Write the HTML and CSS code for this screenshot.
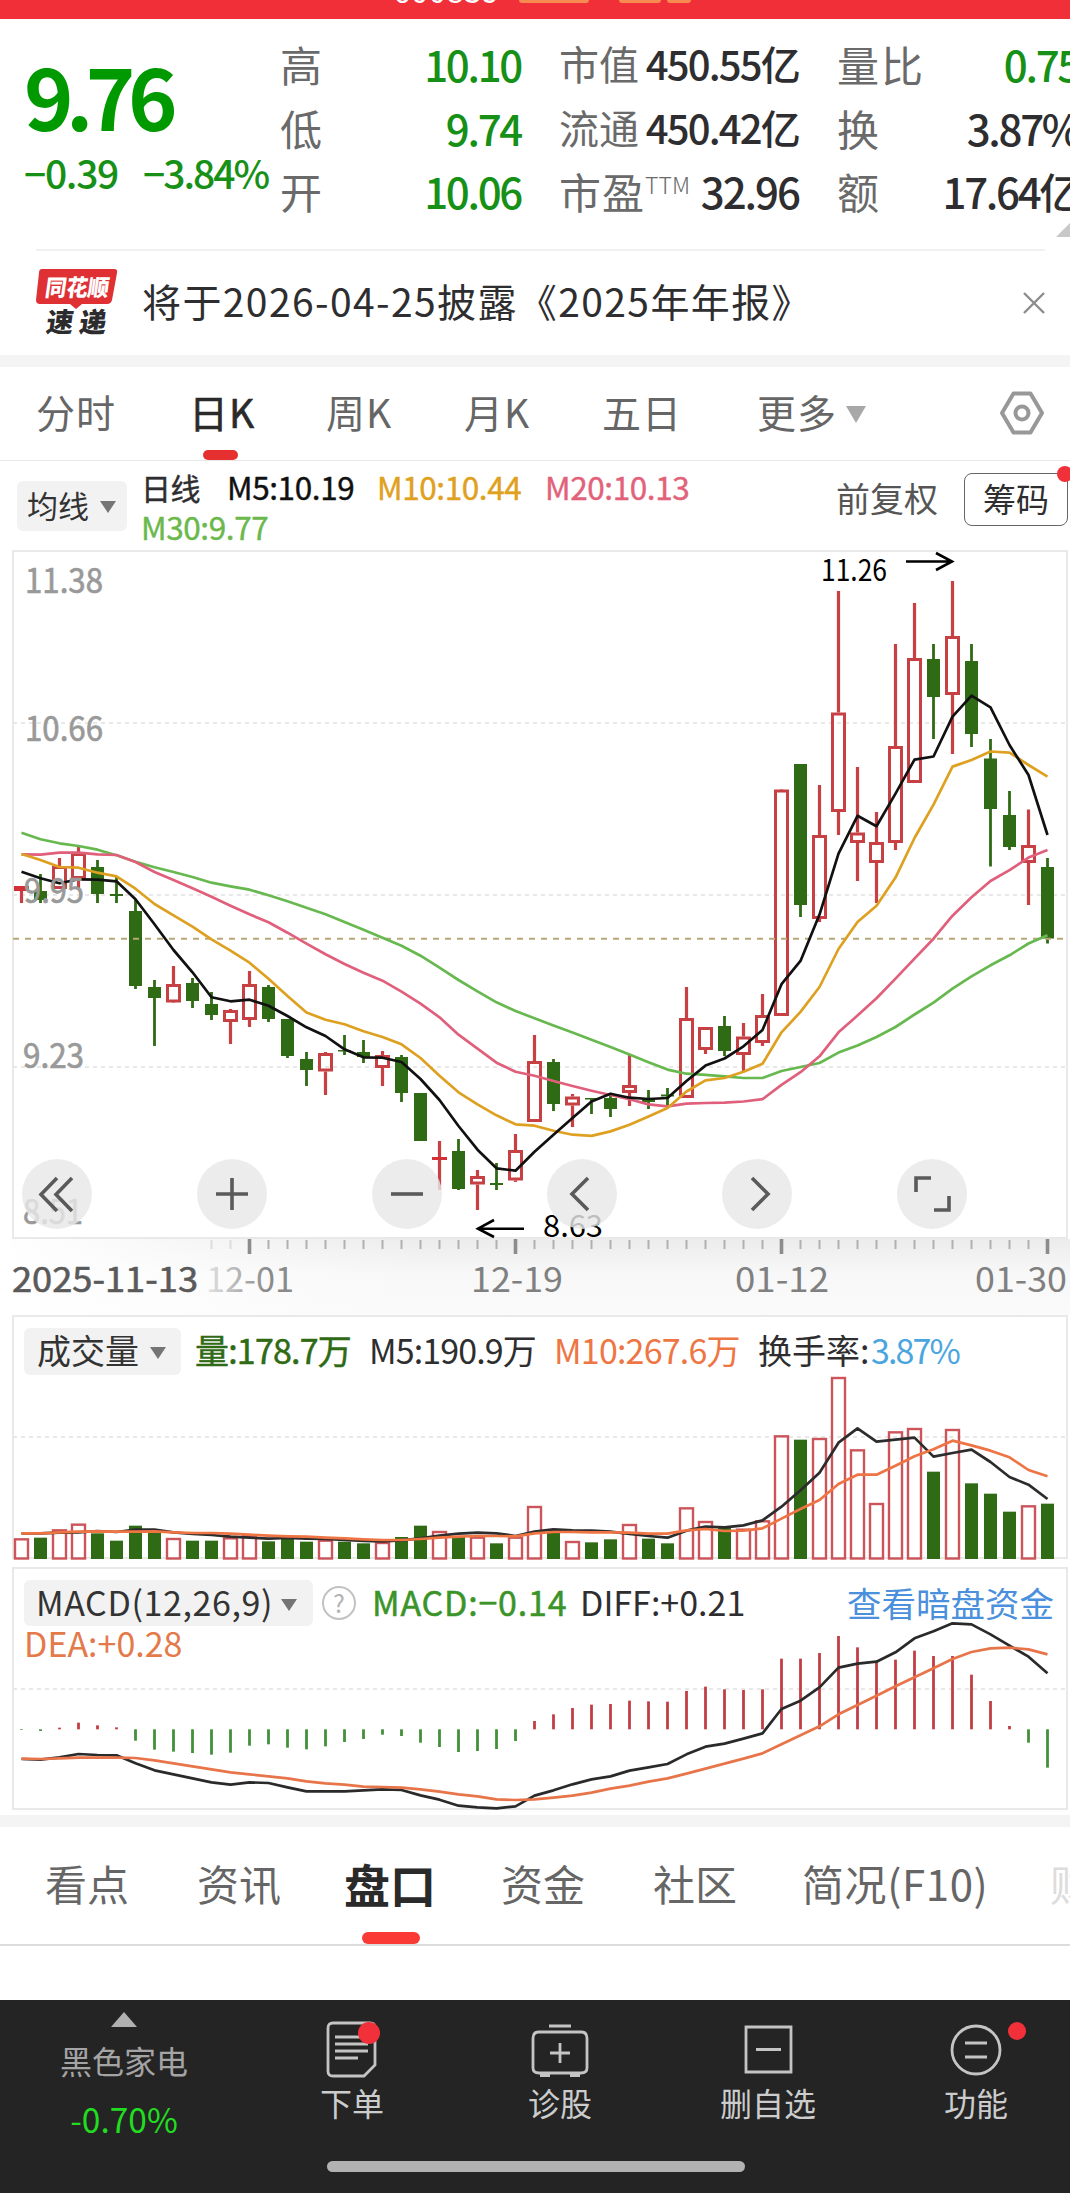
FILE: index.html
```html
<!DOCTYPE html>
<html lang="zh-CN">
  <head>
    <meta charset="utf-8">
    <title>日K</title>
    <link rel="stylesheet" href="styles.css">
  </head>
  <body>
    <div class="strip">
      <span class="strip__code">600839</span>
      <i class="strip__tag"></i><i class="strip__tag strip__tag--b"></i><i class="strip__tag strip__tag--c"></i>
    </div>

    <div class="quote">
      <div class="quote__now">
        <div class="quote__price">9.76</div>
        <div class="quote__change"><span>−0.39</span><span>−3.84%</span></div>
      </div>
      <div class="quote__col quote__col--a">
        <div class="quote__row"><label>高</label><b class="down">10.10</b></div>
        <div class="quote__row"><label>低</label><b class="down">9.74</b></div>
        <div class="quote__row"><label>开</label><b class="down">10.06</b></div>
      </div>
      <div class="quote__col quote__col--b">
        <div class="quote__row"><label>市值</label><b>450.55亿</b></div>
        <div class="quote__row"><label>流通</label><b>450.42亿</b></div>
        <div class="quote__row"><label class="pe">市盈<sup>TTM</sup></label><b class="wide">32.96</b></div>
      </div>
      <div class="quote__col quote__col--c">
        <div class="quote__row"><label>量比</label><b class="down">0.75</b></div>
        <div class="quote__row"><label>换</label><b>3.87%</b></div>
        <div class="quote__row"><label>额</label><b>17.64亿</b></div>
      </div>
      <i class="quote__corner"></i>
    </div>

    <div class="notice">
      <svg class="notice__logo" width="82" height="68" viewBox="0 0 82 68">
        <path d="M6 0H78q4 0 3 4L76 31q-1 4-5 4H46l-6 5-6-5H4q-4 0-4-4L3 4q0-4 3-4z" fill="#df3034"/>
        <g transform="skewX(-8)">
          <text class="logo-text" x="12" y="27" textLength="64" lengthAdjust="spacingAndGlyphs" fill="#fff">同花顺</text>
          <text class="logo-text logo-text--b" x="18" y="63" textLength="60" fill="#2c2c2e">速递</text>
        </g>
      </svg>
      <div class="notice__text">将于2026-04-25披露《2025年年报》</div>
      <svg class="notice__close" width="22" height="22" viewBox="0 0 22 22"><path d="M1 1L21 21M21 1L1 21" stroke="#8c8c8c" stroke-width="2.4"/></svg>
    </div>

    <div class="periods">
      <span>分时</span>
      <span class="periods__on">日K</span>
      <span>周K</span>
      <span>月K</span>
      <span>五日</span>
      <span class="periods__more">更多<i class="tri tri--light"></i></span>
      <svg class="periods__set" width="46" height="44" viewBox="0 0 46 44" fill="none" stroke="#989898" stroke-width="4">
        <path d="M14.500 2.500H31.500L43 22 31.500 41.500H14.500L3 22z" stroke-linejoin="round"/><circle cx="23" cy="22" r="6.500"/>
      </svg>
    </div>

    <div class="ma">
      <span class="pick pick--ma">均线<i class="tri"></i></span>
      <div class="ma__list">
        <span class="ma__name">日线</span><span class="ma__5">M5:10.19</span><span class="ma__10">M10:10.44</span><span class="ma__20">M20:10.13</span><span class="ma__30">M30:9.77</span>
      </div>
      <span class="ma__adjust">前复权</span>
      <span class="ma__chips">筹码<i class="dot"></i></span>
    </div>

    <div class="kline">
      <svg id="kline" width="1056" height="689" viewBox="12 550 1056 689"></svg>
      <div class="tools">
        <span><svg viewBox="0 0 70 70"><path d="M35 19L19 35.500 35 52M50 19L34 35.500 50 52"/></svg></span>
        <span><svg viewBox="0 0 70 70"><path d="M19 35H51M35 19V51"/></svg></span>
        <span><svg viewBox="0 0 70 70"><path d="M19 35H51"/></svg></span>
        <span><svg viewBox="0 0 70 70"><path d="M41 19L25 35 41 51"/></svg></span>
        <span><svg viewBox="0 0 70 70"><path d="M30 19L46 35 30 51"/></svg></span>
        <span><svg viewBox="0 0 70 70"><path d="M19 33V19H34M52 37V51H37"/></svg></span>
      </div>
    </div>

    <svg class="axis" id="axis" width="1070" height="76" viewBox="0 1239 1070 76"></svg>

    <div class="panel panel--vol">
      <svg id="vol" width="1056" height="245" viewBox="12 1314 1056 245"></svg>
      <div class="panel__head">
        <span class="pick pick--vol">成交量<i class="tri"></i></span>
        <span class="v1">量:178.7万</span><span class="v2">M5:190.9万</span><span class="v3">M10:267.6万</span><span class="v4">换手率:</span><span class="v5">3.87%</span>
      </div>
    </div>

    <div class="panel panel--macd">
      <svg id="macd" width="1056" height="243" viewBox="12 1567 1056 243"></svg>
      <div class="panel__head">
        <span class="pick pick--macd">MACD(12,26,9)<i class="tri"></i></span>
        <span class="help">?</span>
        <span class="m1">MACD:−0.14</span><span class="m2">DIFF:+0.21</span><span class="m4">查看暗盘资金</span>
      </div>
      <span class="m3">DEA:+0.28</span>
    </div>

    <div class="tabs">
      <span>看点</span>
      <span>资讯</span>
      <span class="tabs__on">盘口</span>
      <span>资金</span>
      <span>社区</span>
      <span class="tabs__f10">简况(F10)</span>
      <span class="tabs__next">财务</span>
    </div>

    <div class="footer">
      <div class="sector">
        <i class="sector__up"></i>
        <span>黑色家电</span>
        <b>-0.70%</b>
      </div>
      <div class="act">
        <svg width="60" height="58" viewBox="0 0 60 58"><path d="M11 3H48Q53 3 53 8V45L42 56H11Q6 56 6 51V8Q6 3 11 3zM13 17H40M13 24H46M13 31H46M13 38H36"/></svg>
        <i class="dot dot--order"></i><span>下单</span>
      </div>
      <div class="act">
        <svg width="60" height="58" viewBox="0 0 60 58"><path d="M19 6H41M9 12H51Q57 12 57 18V48Q57 53 51 53H9Q3 53 3 48V18Q3 12 9 12zM30 23V43M20 33H40M10 55.500H20M40 55.500H50"/></svg>
        <span>诊股</span>
      </div>
      <div class="act">
        <svg width="60" height="58" viewBox="0 0 60 58"><path d="M8 7H53V52H8zM18 29.500H43"/></svg>
        <span>删自选</span>
      </div>
      <div class="act">
        <svg width="60" height="58" viewBox="0 0 60 58"><circle cx="30" cy="30" r="24"/><path d="M19 23H41M19 37H41"/></svg>
        <i class="dot dot--more"></i><span>功能</span>
      </div>
      <i class="home"></i>
    </div>
    <script src="charts.js"></script>
  </body>
</html>
```
FILE: styles.css
```css
* {
  box-sizing: border-box;
}
body {
  margin: 0;
  width: 1070px;
  height: 2194px;
  overflow: hidden;
  background: #fff;
  color: #2e2e30;
  font-family: "Noto Sans CJK SC", "Noto Sans", sans-serif;
}
i, b {
  font-style: normal;
  font-weight: 500;
}
svg {
  display: block;
}
.down {
  color: #169016;
}

/* header strip */
.strip {
  height: 19px;
  background: #f12f38;
  display: flex;
  overflow: hidden;
  padding-left: 393px;
}
.strip__code {
  color: #fff;
  font-size: 32px;
  line-height: 32px;
  margin-top: -27px;
  width: 126px;
}
.strip__tag {
  height: 3px;
  width: 70px;
  background: #f68a50;
  border-radius: 0 0 3px 3px;
}
.strip__tag--b {
  width: 42px;
  margin-left: 30px;
}
.strip__tag--c {
  width: 24px;
  margin-left: 6px;
}

/* quote */
.quote {
  position: relative;
  height: 230px;
  display: flex;
  overflow: hidden;
}
.quote__now {
  width: 280px;
  flex: none;
  padding: 34px 0 0 24px;
  color: #009900;
}
.quote__price {
  font-size: 84px;
  line-height: 84px;
  font-weight: 700;
  letter-spacing: -7.5px;
}
.quote__change {
  display: flex;
  margin-top: 15px;
  font-size: 39px;
  line-height: 40px;
  font-weight: 500;
  letter-spacing: -2px;
  color: #169016;
}
.quote__change span:first-child {
  width: 119px;
  letter-spacing: -1.3px;
}
.quote__col {
  flex: none;
  padding-top: 13px;
}
.quote__col--a {
  width: 241px;
}
.quote__col--b {
  width: 240px;
  margin-left: 38px;
}
.quote__col--c {
  width: 242px;
  margin-left: 38px;
}
.quote__row {
  display: flex;
  justify-content: space-between;
  height: 63.5px;
  line-height: 63.5px;
  font-size: 42px;
  white-space: nowrap;
}
.quote__row label {
  color: #6a6a6a;
}
.quote__row b {
  letter-spacing: -2.3px;
}
.quote__row label.pe {
  font-size: 42px;
  letter-spacing: 1px;
}
.quote__col--b .quote__row {
  font-size: 40px;
}
.quote__col--b b {
  letter-spacing: -1.8px;
}
.quote__col--b b.wide {
  font-size: 42px;
  letter-spacing: -2px;
}
.quote__col--c label {
  letter-spacing: 2px;
}
.quote__row sup {
  font-size: 23px;
  font-weight: 300;
  letter-spacing: 0;
  line-height: 0;
  vertical-align: 15px;
}
.quote__corner {
  position: absolute;
  right: -18px;
  top: 202px;
  border: 16px solid transparent;
  border-top: 0;
  border-bottom-color: #c8c8c8;
}

/* notice */
.notice {
  display: flex;
  height: 106px;
  margin: 0 25px 0 36px;
  padding-top: 18px;
  border-top: 2px solid #f1f1f1;
}
.logo-text {
  font-size: 23px;
  font-weight: 900;
}
.logo-text--b {
  font-size: 27px;
}
.notice__text {
  margin: 8px 0 0 24px;
  width: 881px;
  font-size: 39px;
  line-height: 46px;
  letter-spacing: 1.4px;
  white-space: nowrap;
}
.notice__close {
  margin-top: 23px;
}

/* periods */
.periods {
  display: flex;
  height: 106px;
  border-top: 12px solid #f4f4f4;
  border-bottom: 1px solid #e8e8e8;
  font-size: 39px;
  line-height: 88px;
  color: #666;
  padding-left: 36px;
  letter-spacing: 1px;
}
.periods span {
  flex: none;
  width: 138px;
}
.periods span:nth-child(1) {
  width: 153px;
}
.periods span.periods__on {
  width: 137px;
  color: #2a2a2a;
  -webkit-text-stroke: .6px #2a2a2a;
  position: relative;
}
.periods__on::after {
  content: "";
  position: absolute;
  left: 14px;
  bottom: 0;
  width: 35px;
  height: 10px;
  border-radius: 5px;
  background: #e63030;
}
.periods span:nth-child(5) {
  width: 155px;
}
.periods span.periods__more {
  width: 242px;
}
.periods__set {
  margin-top: 24px;
}
.tri {
  display: inline-block;
  border: 8.5px solid transparent;
  border-top: 12px solid #757575;
  border-bottom: 0;
  vertical-align: 5px;
  margin-left: 11px;
}
.tri--light {
  border-width: 17px 10px 0;
  border-top-color: #a8a8a8;
  margin-left: 9px;
}
.pick {
  flex: none;
  background: #f2f2f2;
  border-radius: 6px;
  color: #333;
  white-space: nowrap;
}

/* ma row */
.ma {
  display: flex;
  height: 89px;
}
.pick--ma {
  width: 110px;
  height: 50px;
  margin: 20px 0 0 17px;
  padding-left: 10px;
  font-size: 31px;
  line-height: 48px;
}
.ma__list {
  margin: 6px 0 0 14px;
  width: 695px;
  font-size: 31.5px;
  line-height: 39px;
  letter-spacing: -0.4px;
}
.ma__list span {
  display: inline-block;
  -webkit-text-stroke: .4px;
}
.ma__name {
  width: 86px;
  font-size: 30px;
}
.ma__5 {
  width: 150px;
  color: #111;
}
.ma__10 {
  width: 168px;
  color: #e0a020;
}
.ma__20 {
  width: 180px;
  color: #e2627a;
}
.ma__30 {
  color: #6bb84c;
}
.ma__adjust {
  width: 128px;
  font-size: 34px;
  line-height: 74px;
  color: #555;
}
.ma__chips {
  position: relative;
  width: 104px;
  height: 53px;
  margin-top: 12px;
  border: 1px solid #666;
  border-radius: 8px;
  font-size: 33px;
  line-height: 48px;
  text-align: center;
}
.dot {
  position: absolute;
  width: 16px;
  height: 16px;
  border-radius: 50%;
  background: #f2303a;
  right: -6px;
  top: -8px;
}

/* charts */
.kline {
  position: relative;
  padding-left: 12px;
  height: 689px;
}
.tools {
  position: absolute;
  left: 22px;
  top: 609px;
  display: flex;
  gap: 105px;
}
.tools span {
  width: 70px;
  height: 70px;
  border-radius: 50%;
  background: rgba(232, 232, 232, .82);
}
.tools path {
  fill: none;
  stroke: #5a5a5a;
  stroke-width: 3.6;
}
.axis {
  background: linear-gradient(90deg, #fff 0, rgba(255, 255, 255, 0) 420px), linear-gradient(#ececec 0, #f8f8f8 36px, #fafafa 100%);
}
.panel {
  position: relative;
  padding-left: 12px;
}
.panel--vol {
  height: 252px;
}
.panel--macd {
  height: 248px;
}
.panel__head {
  position: absolute;
  left: 24px;
  top: 13px;
  display: flex;
  font-size: 34px;
  line-height: 44px;
  white-space: nowrap;
}
.panel__head span {
  flex: none;
}
.pick--vol {
  width: 157px;
  height: 47px;
  padding-left: 13px;
}
.v1 {
  color: #2f6a14;
  width: 174px;
  margin-left: 14px;
  letter-spacing: -.8px;
  -webkit-text-stroke: .5px;
}
.v2 {
  width: 185px;
  letter-spacing: -.9px;
}
.v3 {
  width: 204px;
  letter-spacing: -.8px;
  color: #ee7644;
}
.v4 {
  width: 113px;
}
.v5 {
  color: #4ba6e0;
  letter-spacing: -1.9px;
}
.pick--macd {
  width: 289px;
  height: 46px;
  padding-left: 12px;
  letter-spacing: .6px;
}
.pick--macd .tri {
  margin-left: 8px;
}
.help {
  width: 34px;
  height: 34px;
  margin: 6px 0 0 9px;
  border: 2px solid #c2c2c2;
  border-radius: 50%;
  color: #b4b4b4;
  font-size: 25px;
  line-height: 29px;
  text-align: center;
}
.m1 {
  color: #3a9428;
  width: 208px;
  margin-left: 16px;
  letter-spacing: .8px;
  -webkit-text-stroke: .5px;
}
.m2 {
  width: 267px;
}
.m3 {
  position: absolute;
  left: 24px;
  top: 54px;
  font-size: 34px;
  line-height: 44px;
  color: #e4794a;
}
.m4 {
  color: #4a90dc;
  font-size: 34.5px;
}

/* tabs */
.tabs {
  display: flex;
  height: 131px;
  border-top: 12px solid #f4f4f4;
  border-bottom: 2px solid #dcdcdc;
  padding-left: 45px;
  font-size: 42px;
  line-height: 112px;
  color: #666;
  overflow: hidden;
}
.tabs span {
  flex: none;
  width: 152px;
}
.tabs span:nth-child(2) {
  width: 147px;
}
.tabs span.tabs__on {
  position: relative;
  width: 157px;
  color: #2a2a2a;
  font-size: 46px;
  font-weight: 700;
}
.tabs__on::after {
  content: "";
  position: absolute;
  left: 18px;
  bottom: 0;
  width: 58px;
  height: 12px;
  border-radius: 6px;
  background: #fa3a34;
}
.tabs span:nth-child(5) {
  width: 149px;
}
.tabs span.tabs__f10 {
  width: 248px;
  letter-spacing: .6px;
}
.tabs__next {
  color: #ddd;
}

/* footer */
.footer {
  position: relative;
  display: grid;
  grid-template-columns: 248px repeat(4, 208px);
  height: 193px;
  margin-top: 54px;
  background: #242424;
  overflow: hidden;
  color: #ccc;
  font-size: 32px;
  line-height: 40px;
}
.sector {
  display: flex;
  flex-direction: column;
  align-items: center;
  padding-top: 12px;
  color: #a4a4a4;
}
.sector__up {
  border: 13px solid transparent;
  border-top: 0;
  border-bottom: 15px solid #b0b0b0;
}
.sector span {
  margin-top: 13px;
}
.sector b {
  color: #22dc22;
  font-size: 33.5px;
  margin-top: 19px;
  font-weight: 400;
}
.act {
  position: relative;
  display: flex;
  flex-direction: column;
  align-items: center;
  padding-top: 20px;
}
.act svg {
  fill: none;
  stroke: #c4c4c4;
  stroke-width: 2.8;
}
.act span {
  margin-top: 4px;
}
.dot--order {
  width: 22px;
  height: 22px;
  right: 76px;
  top: 22px;
}
.dot--more {
  width: 18px;
  height: 18px;
  right: 54px;
  top: 22px;
}
.home {
  position: absolute;
  left: 327px;
  top: 161px;
  width: 418px;
  height: 11px;
  border-radius: 6px;
  background: #b2b2b2;
}

/* svg text */
.lbl {
  fill: #999;
  stroke: #999;
  stroke-width: .7px;
  font-size: 34px;
}
.mark {
  fill: #000;
  font-size: 30px;
}
.date {
  font-size: 34px;
}
```
FILE: charts.js
```js
const RED = '#c64044';
const GREEN = '#2f6a14';
const X = i => 21.5 + 19 * i;

// color, high, body top, body bottom, low
const candles = [
  ['r', 886, 886, 891, 903], ['g', 874, 891, 900, 903], ['r', 858, 866, 889, 889], ['r', 847, 853, 879, 888],
  ['g', 860, 867, 894, 903], ['g', 877, 894, 896, 903], ['g', 900, 911, 986, 989], ['g', 980, 987, 998, 1046],
  ['r', 966, 984, 1002.5, 1002], ['g', 978, 983, 1001, 1008], ['g', 992, 1004, 1015, 1020], ['r', 1009, 1010, 1022, 1044],
  ['r', 971, 984, 1020, 1027], ['g', 985, 987, 1019, 1022], ['g', 1019, 1019, 1056, 1058], ['g', 1052, 1059, 1070, 1086],
  ['r', 1052, 1053, 1071.5, 1095], ['g', 1035, 1050, 1051.5, 1055], ['g', 1040, 1052, 1057, 1063], ['r', 1051, 1055, 1068, 1086],
  ['g', 1055, 1057, 1093, 1102], ['g', 1093, 1093, 1141, 1141], ['r', 1141, 1157, 1160, 1190], ['g', 1139, 1151, 1189, 1190],
  ['r', 1170, 1176, 1184.5, 1210], ['g', 1163, 1183, 1185, 1190], ['r', 1134, 1150, 1180.5, 1182], ['r', 1035, 1061, 1122, 1122],
  ['g', 1059, 1062, 1104, 1111], ['r', 1094, 1096.5, 1105.5, 1127], ['g', 1098, 1098, 1099.5, 1114], ['g', 1093, 1098, 1109, 1117],
  ['r', 1055, 1085, 1093, 1106], ['g', 1090, 1099, 1102, 1109], ['g', 1088, 1094.5, 1096.5, 1106], ['r', 987, 1018, 1098, 1098],
  ['r', 1027, 1027, 1050, 1054], ['g', 1016, 1026, 1051, 1056], ['r', 1023, 1036.5, 1055, 1071], ['r', 994, 1015, 1043, 1046],
  ['r', 790, 789.5, 1016, 1016], ['g', 764, 764, 905, 917], ['r', 785, 835, 919, 922], ['r', 591, 712.5, 812, 835],
  ['r', 767, 832.5, 843, 881], ['r', 812, 842, 863, 903], ['r', 644, 746, 843, 850], ['r', 603, 658, 783, 783],
  ['g', 644, 659, 697, 739], ['r', 581, 636, 695, 754], ['g', 644, 661, 734, 747], ['g', 739, 758.5, 809, 866.5],
  ['g', 791, 815, 847, 850], ['r', 809.5, 845, 863, 905], ['g', 858, 867, 938.5, 943.5]
];
const ma5 = [871.7, 878.3, 883.3, 879.3, 879.7, 881.3, 899.3, 924.3, 950, 972.3, 997.3, 1001.3, 999.7, 1005.7, 1016, 1027.3, 1036, 1049.3, 1057.3, 1057.7, 1062, 1079, 1100, 1126, 1149.7, 1168.3, 1170.7, 1151.8, 1134.7, 1118, 1101.5, 1093.7, 1097.7, 1099, 1098, 1081, 1065.6, 1058.5, 1046.3, 1030, 984.2, 960.9, 914.6, 853.6, 815.8, 826.2, 793.6, 759.6, 756.5, 716.7, 695.7, 707.3, 745, 775, 835];
const ma10 = [854, 860, 867, 867.7, 872.7, 876.3, 888.7, 904, 915.3, 926.7, 939.3, 950.7, 962.7, 978.7, 996, 1012.5, 1019.7, 1024.3, 1031.3, 1037, 1044.3, 1058, 1075.7, 1092.3, 1104.3, 1115.3, 1124.3, 1125.7, 1130.7, 1134.7, 1135.9, 1131.4, 1124.8, 1116.6, 1108, 1091.5, 1080.4, 1078, 1071.8, 1063.7, 1032.3, 1011.9, 987, 949, 922, 905.7, 877.6, 838, 804.7, 766.6, 760, 751.5, 752.6, 765, 776.6];
const ma20 = [854.3, 854.7, 852.7, 852.7, 854.3, 855, 862, 872, 880, 888.3, 896.7, 905.7, 914.3, 922.3, 932.7, 943.7, 954.3, 964, 972.7, 980.7, 991.7, 1003.7, 1017.3, 1034.7, 1048.7, 1062.7, 1071.7, 1075.8, 1081, 1086, 1090.7, 1095, 1099.2, 1104.4, 1106.3, 1103.7, 1103, 1102.6, 1101.5, 1099.2, 1084.8, 1072.2, 1056.3, 1032.3, 1015.6, 998.2, 978.6, 958.6, 938.7, 915.7, 897.2, 881, 870.2, 857.6, 849.9];
const ma30 = [832.7, 839.3, 843.3, 846, 849.7, 855.3, 861.7, 867.3, 872, 877, 882.7, 886.3, 889.7, 895.3, 901.3, 907.7, 914.3, 922, 929.7, 937.7, 945.7, 955.7, 967.7, 980, 991.3, 1002.3, 1011, 1018.2, 1025.6, 1032.6, 1039.7, 1047, 1054.5, 1062.2, 1069.6, 1073.7, 1074.8, 1076.3, 1078, 1078, 1071, 1067, 1063, 1052.6, 1045.6, 1037, 1027, 1014.5, 1002.7, 988.6, 976.4, 965.3, 955.3, 943.5, 935.3];

// the two lower panels keep their series at 3 units per pixel
const volTop = [682, 680, 655, 638, 667, 689, 644, 663, 681, 689, 689, 679, 672, 691, 681, 692, 686, 692, 697, 693, 678, 644, 660, 677, 677, 697, 677, 585, 663, 690, 694, 685, 639, 683, 697, 589, 630, 650, 653, 628, 373, 386, 381, 198, 415, 576, 361, 351, 482, 354, 517, 548, 602, 583, 578];
const vol5 = [667, 667, 665, 664, 660, 663, 656, 656, 664, 669, 672, 677, 680, 683, 681, 683, 684, 687, 690, 691, 688, 682, 674, 668, 665, 667, 675, 662, 655, 658, 659, 662, 669, 675, 680, 659, 647, 649, 643, 628, 587, 538, 485, 395, 352, 392, 386, 380, 437, 426, 416, 453, 498, 521, 564];
const vol10 = [667, 667, 664, 662, 661, 662, 662, 661, 664, 666, 666, 668, 671, 674, 676, 677, 680, 682, 685, 687, 687, 684, 680, 677, 675, 675, 676, 667, 663, 663, 664, 664, 665, 668, 668, 658, 654, 660, 659, 652, 623, 594, 567, 519, 491, 491, 464, 436, 415, 389, 403, 419, 439, 477, 496];
const bars = [510, 513, 503, 488, 496, 502, 542, 569, 575, 579, 584, 578, 557, 553, 563, 568, 559, 546, 537, 524, 528, 548, 561, 576, 573, 567, 543, 483, 463, 444, 434, 432, 422, 424, 425, 393, 380, 388, 390, 388, 296, 296, 279, 228, 262, 305, 299, 272, 288, 288, 344, 423, 498, 548, 623];
const diff = [597, 599, 592, 582, 585, 586, 610, 631, 643, 655, 667, 674, 667, 669, 682, 694, 694, 694, 691, 688, 690, 706, 719, 737, 742, 745, 739, 707, 691, 673, 658, 649, 632, 622, 612, 583, 560, 551, 536, 520, 447, 422, 382, 323, 311, 305, 277, 235, 214, 190, 193, 223, 257, 290, 340];
const dea = [596, 597, 595, 593, 593, 593, 594, 601, 610, 619, 628, 637, 643, 649, 655, 664, 670, 674, 680, 681, 683, 688, 695, 703, 709, 718, 720, 718, 713, 707, 698, 686, 677, 665, 655, 641, 626, 611, 596, 580, 553, 526, 499, 463, 435, 407, 379, 352, 325, 297, 276, 265, 263, 268, 283];

const rect = (x, y, w, h, attrs) => `<rect x="${x}" y="${y}" width="${w}" height="${h}" ${attrs}/>`;
const line = (x1, y1, x2, y2, color, w = 2, dash = '') =>
  `<line x1="${x1}" y1="${y1}" x2="${x2}" y2="${y2}" stroke="${color}" stroke-width="${w}" stroke-dasharray="${dash}"/>`;
const poly = (data, color, y = v => v) =>
  `<polyline fill="none" stroke="${color}" stroke-width="2.7" stroke-linejoin="round" points="${data.map((v, i) => X(i) + ',' + y(v)).join(' ')}"/>`;
const text = (cls, x, y, w, s, attrs = '') =>
  `<text class="${cls}" x="${x}" y="${y}" textLength="${w}" lengthAdjust="spacingAndGlyphs" ${attrs}>${s}</text>`;
const frame = (y, h) => rect(13, y, 1054, h, 'fill="none" stroke="#e9e9e9" stroke-width="2"');
const grid = y => line(13, y, 1066, y, '#e8e8e8', 2, '4 4');

function candle([c, hi, top, bot, lo], i) {
  const x = X(i);
  if (c === 'g') {
    return line(x, hi, x, lo, GREEN, 2.8) + rect(x - 6.5, top, 13, bot - top, `fill="${GREEN}"`);
  }
  if (bot - top < 6) {
    return line(x, hi, x, lo, RED, 3.2) + rect(x - 7.5, top, 15, bot - top, 'fill="#d23034"');
  }
  return line(x, hi, x, top, RED, 3.2) + line(x, bot, x, lo, RED, 3.2) +
    rect(x - 6, top + 1.5, 12, bot - top - 3, `fill="none" stroke="${RED}" stroke-width="3"`);
}

document.getElementById('kline').innerHTML =
  frame(551, 687) + grid(723) + grid(895) + grid(1067) +
  candles.map(candle).join('') +
  line(13, 938.7, 1066, 938.7, '#b8a878', 2, '6 6') +
  poly(ma30, '#68b850') + poly(ma20, '#e0607c') + poly(ma10, '#dea020') + poly(ma5, '#111') +
  text('lbl', 25, 593, 78, '11.38') + text('lbl', 25, 741, 78, '10.66') +
  text('lbl', 24, 903, 60, '9.95') + text('lbl', 23, 1068, 61, '9.23') + text('lbl', 23, 1224, 60, '8.51') +
  text('mark', 821, 581, 66, '11.26') + text('mark', 543, 1237, 60, '8.63') +
  '<path d="M906 561.500H951M936 553L952 561.500 936 570M524 1228.700H478M494 1220L478 1228.700 494 1237" fill="none" stroke="#000" stroke-width="2.600"/>';

let ticks = '';
for (let i = 10; i < 55; i++) {
  const major = (i - 12) % 14 === 0;
  ticks += major ? line(X(i), 1239, X(i), 1254, '#8c8c8c', 3.6) : line(X(i), 1240, X(i), 1249, i < 12 ? '#ddd' : '#b0b0b0', 2);
}
document.getElementById('axis').innerHTML =
  '<defs><linearGradient id="fade" x1="0" x2="1"><stop offset="0" stop-color="#e4e4e4"/><stop offset=".7" stop-color="#8a8a8a"/></linearGradient></defs>' +
  ticks +
  text('date', 12, 1292, 186, '2025-11-13', 'fill="#5a5a5a" stroke="#5a5a5a" stroke-width=".6"') +
  text('date', 206, 1292, 88, '12-01', 'fill="url(#fade)"') +
  text('date', 471, 1292, 92, '12-19', 'fill="#808080"') + text('date', 735, 1292, 94, '01-12', 'fill="#808080"') +
  text('date', 975, 1292, 92, '01-30', 'fill="#808080"');

const volY = v => 1310 + v / 3;
document.getElementById('vol').innerHTML =
  frame(1315, 242) + grid(1436) +
  volTop.map((v, i) => {
    const y = volY(v);
    return candles[i][0] === 'g'
      ? rect(X(i) - 6.5, y, 13, 1558 - y, `fill="${GREEN}"`)
      : rect(X(i) - 6.5, y + 1, 13, 1556.5 - y, 'fill="none" stroke="#cb555a" stroke-width="2.4"');
  }).join('') +
  poly(vol5, '#2c2c2c', volY) + poly(vol10, '#ee7444', volY);

const macdY = v => 1560 + v / 3;
document.getElementById('macd').innerHTML =
  frame(1568, 241) + grid(1689) +
  bars.map((v, i) => line(X(i), 1729.3, X(i), macdY(v), v > 508 ? '#42903a' : '#c23e44', 2.8)).join('') +
  poly(diff, '#2a2a2a', macdY) + poly(dea, '#e8744a', macdY);
```
